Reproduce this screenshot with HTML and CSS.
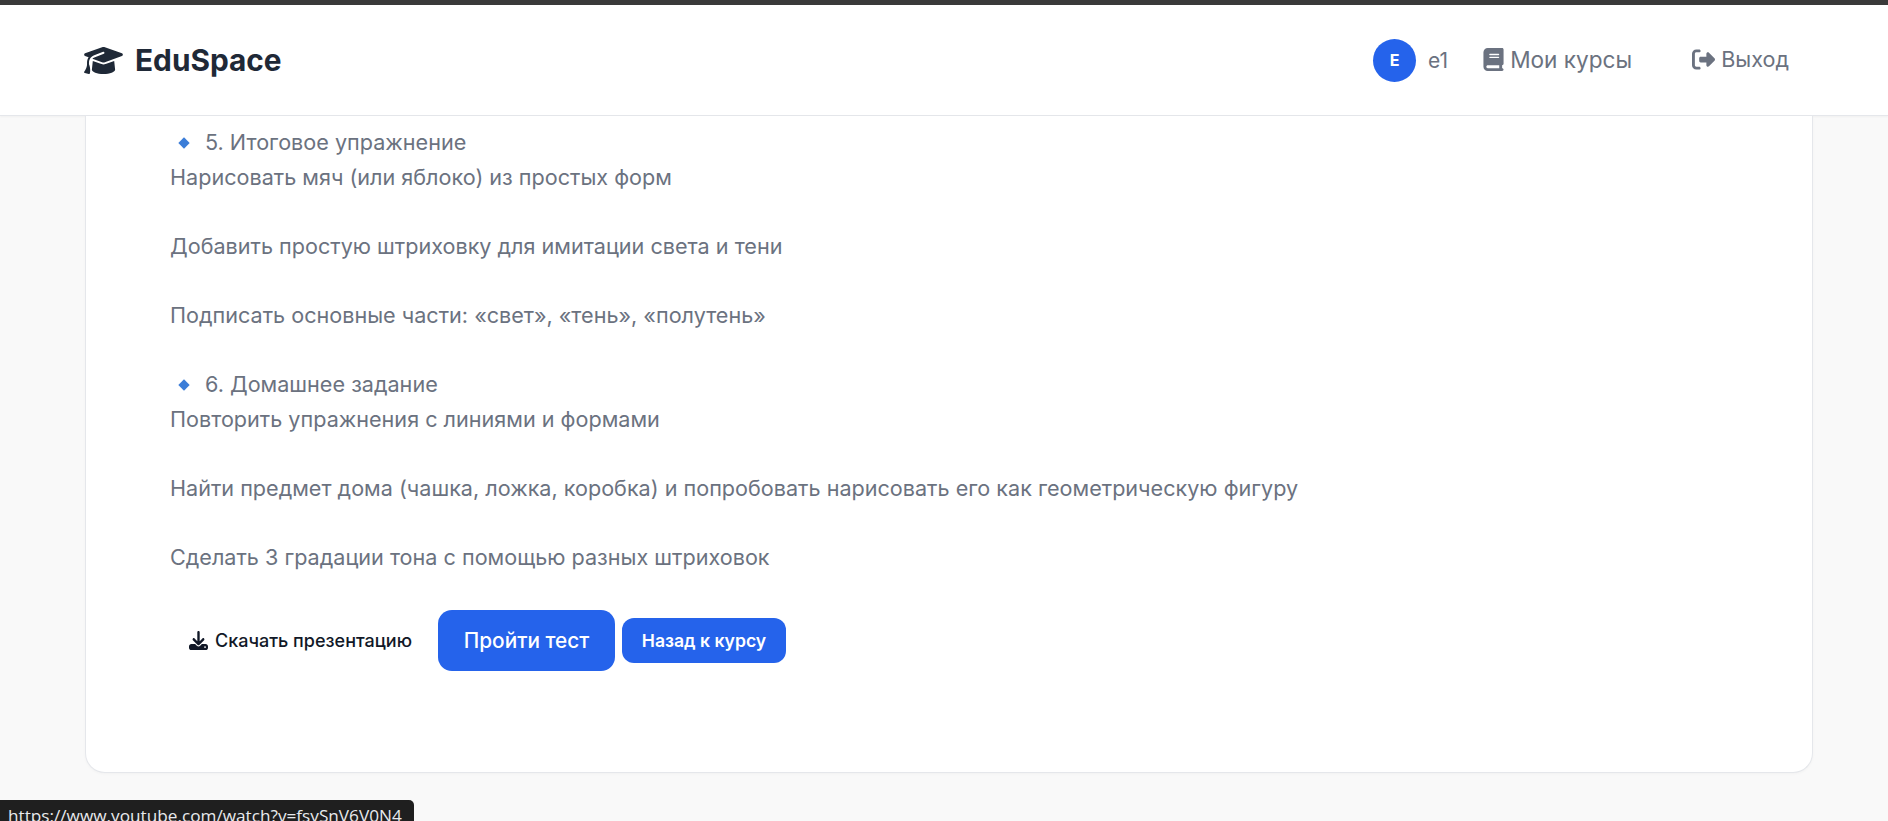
FILE: index.html
```html
<!DOCTYPE html>
<html lang="ru">
<head>
	<meta charset="utf-8">
	<title>EduSpace</title>
	<link rel="stylesheet" href="styles.css">
</head>
<body>
	<header class="header">
		<a class="logo" href="#">
			<svg class="logo-icon" viewBox="0 0 640 512"><path d="M320 32c-8.1 0-16.1 1.4-23.7 4.1L15.8 137.4C6.3 140.9 0 149.9 0 160s6.3 19.1 15.8 22.6l57.9 20.9C57.3 229.3 48 259.8 48 291.9v28.1c0 28.4-10.8 57.7-22.3 80.8c-6.5 13-13.9 25.8-22.5 37.6C0 442.7-.9 448.3 .9 453.4s6 8.9 11.2 10.2l64 16c4.2 1.1 8.7 .3 12.4-2s6.3-6.1 7.1-10.4c8.6-42.8 4.3-81.2-2.1-108.7C90.3 344.3 86 329.8 80 316.5V291.9c0-30.2 10.2-58.7 27.9-81.5c12.9-15.5 29.6-28 49.2-35.7l157-61.7c8.2-3.2 17.5 .8 20.7 9s-.8 17.5-9 20.7l-157 61.7c-12.4 4.9-23.3 12.4-32.2 21.6l159.6 57.6c7.6 2.7 15.6 4.1 23.7 4.1s16.1-1.4 23.7-4.1L624.2 182.6c9.5-3.4 15.8-12.5 15.8-22.6s-6.3-19.1-15.8-22.6L343.7 36.1C336.1 33.4 328.1 32 320 32zM128 408c0 35.3 86 72 192 72s192-36.7 192-72L496.7 262.6 354.5 314c-11.1 4-22.8 6-34.5 6s-23.5-2-34.5-6L143.3 262.6 128 408z"/></svg>
			<span>EduSpace</span>
		</a>
		<nav class="nav">
			<div class="user">
				<span class="avatar">E</span>
				<span class="username">e1</span>
			</div>
			<a class="nav-link courses" href="#">
				<svg class="nav-icon book" viewBox="0 0 448 512"><path d="M96 0C43 0 0 43 0 96V416c0 53 43 96 96 96H384h32c17.7 0 32-14.3 32-32s-14.3-32-32-32V384c17.7 0 32-14.3 32-32V32c0-17.7-14.3-32-32-32H384 96zm0 384H352v64H96c-17.7 0-32-14.3-32-32s14.3-32 32-32zm32-240c0-8.8 7.2-16 16-16H336c8.8 0 16 7.2 16 16s-7.2 16-16 16H144c-8.8 0-16-7.2-16-16zm16 48H336c8.8 0 16 7.2 16 16s-7.2 16-16 16H144c-8.8 0-16-7.2-16-16s7.2-16 16-16z"/></svg>
				Мои курсы
			</a>
			<a class="nav-link logout" href="#">
				<svg class="nav-icon exit" viewBox="0 0 512 512"><path d="M377.9 105.9L500.7 228.7c7.2 7.2 11.3 17.1 11.3 27.3s-4.1 20.1-11.3 27.3L377.9 406.1c-6.4 6.4-15 9.9-24 9.9c-18.7 0-33.9-15.2-33.9-33.9l0-62.1-128 0c-17.7 0-32-14.3-32-32l0-64c0-17.7 14.3-32 32-32l128 0 0-62.1c0-18.7 15.2-33.9 33.9-33.9c9 0 17.6 3.6 24 9.9zM160 96L96 96c-17.7 0-32 14.3-32 32l0 256c0 17.7 14.3 32 32 32l64 0c17.7 0 32 14.3 32 32s-14.3 32-32 32l-64 0c-53 0-96-43-96-96L0 128C0 75 43 32 96 32l64 0c17.7 0 32 14.3 32 32s-14.3 32-32 32z"/></svg>
				Выход
			</a>
		</nav>
	</header>

	<main class="card">
		<div class="lesson-text">
			<span class="diamond"></span>5. Итоговое упражнение<br>
			Нарисовать мяч (или яблоко) из простых форм<br>
			<br>
			Добавить простую штриховку для имитации света и тени<br>
			<br>
			Подписать основные части: «свет», «тень», «полутень»<br>
			<br>
			<span class="diamond"></span>6. Домашнее задание<br>
			Повторить упражнения с линиями и формами<br>
			<br>
			Найти предмет дома (чашка, ложка, коробка) и попробовать нарисовать его как геометрическую фигуру<br>
			<br>
			Сделать 3 градации тона с помощью разных штриховок
		</div>
		<div class="actions">
			<a class="btn-download" href="#">
				<svg class="download-icon" viewBox="0 0 512 512"><path d="M288 32c0-17.7-14.3-32-32-32s-32 14.3-32 32V274.7l-73.4-73.4c-12.5-12.5-32.8-12.5-45.3 0s-12.5 32.8 0 45.3l128 128c12.5 12.5 32.8 12.5 45.3 0l128-128c12.5-12.5 12.5-32.8 0-45.3s-32.8-12.5-45.3 0L288 274.7V32zM64 352c-35.3 0-64 28.7-64 64v32c0 35.3 28.7 64 64 64H448c35.3 0 64-28.7 64-64V416c0-35.3-28.7-64-64-64H346.5l-45.3 45.3c-25 25-65.5 25-90.5 0L165.5 352H64zm368 56a24 24 0 1 1 0 48 24 24 0 1 1 0-48z"/></svg>
				Скачать презентацию
			</a>
			<a class="btn btn-large" href="#">Пройти тест</a>
			<a class="btn btn-small" href="#">Назад к курсу</a>
		</div>
	</main>

	<div class="link-status">https://www.youtube.com/watch?v=fsySnV6V0N4</div>
</body>
</html>
```

FILE: styles.css
```css
*{box-sizing:border-box;}
html,body{height:100%;}
body{margin:0;overflow:hidden;background:#f9f9f9;border-top:5px solid #3a3a3a;font-family:Inter,"Liberation Sans",sans-serif;color:#6b7280;}
a{color:inherit;text-decoration:none;}

.header{display:flex;align-items:center;justify-content:space-between;height:111px;padding:0 99px 0 84px;background:#fff;border-bottom:1px solid #e5e7eb;box-shadow:0 1px 2px rgba(0,0,0,.04);}
.logo{display:flex;align-items:center;gap:12px;font-size:29.8px;font-weight:700;color:#1f2937;}
.logo-icon{width:39px;height:31px;fill:#1f2937;}
.nav{display:flex;align-items:center;}
.user{display:flex;align-items:center;gap:12px;margin-right:35px;}
.avatar{display:flex;align-items:center;justify-content:center;width:43px;height:43px;border-radius:50%;background:#2563eb;color:#fff;font-size:16px;font-weight:700;}
.username{font-size:21px;}
.nav-link{display:flex;align-items:center;gap:6px;font-size:22.6px;margin-top:-2px;}
.courses{margin-right:60px;}
.logout{font-size:21.6px;}
.nav-icon{height:23px;fill:#6b7280;}
.book{width:21px;}
.exit{width:23px;}

.card{height:657px;margin:0 75px 0 85px;padding:0 84px;background:#fff;border:1px solid #e5e7eb;border-top:0;border-radius:0 0 20px 20px;box-shadow:0 1px 3px rgba(0,0,0,.03);}
.lesson-text{padding-top:9px;font-size:21.6px;line-height:34.56px;}
.diamond{display:inline-block;width:8px;height:8px;margin:0 17px 3px 10px;background:#3b7dd8;transform:rotate(45deg);}

.actions{display:flex;align-items:center;margin-top:36px;}
.btn-download{display:flex;align-items:center;gap:7px;padding:0 26px 0 19px;color:#111827;font-size:18px;font-weight:500;}
.download-icon{width:19px;height:19px;fill:#111827;}
.btn{display:flex;align-items:center;justify-content:center;background:#2563eb;color:#fff;}
.btn-large{width:177px;height:61px;margin-right:7px;border-radius:14px;font-size:20.8px;font-weight:500;}
.btn-small{width:164px;height:45px;border-radius:12px;font-size:17.6px;font-weight:600;}

.link-status{position:fixed;left:0;bottom:0;width:414px;height:21px;padding:6px 0 0 8px;overflow:hidden;background:#1f1f1f;border-radius:0 5px 0 0;color:#e8eaed;font-size:17.2px;line-height:20px;font-family:"Open Sans",sans-serif;white-space:nowrap;}
```
